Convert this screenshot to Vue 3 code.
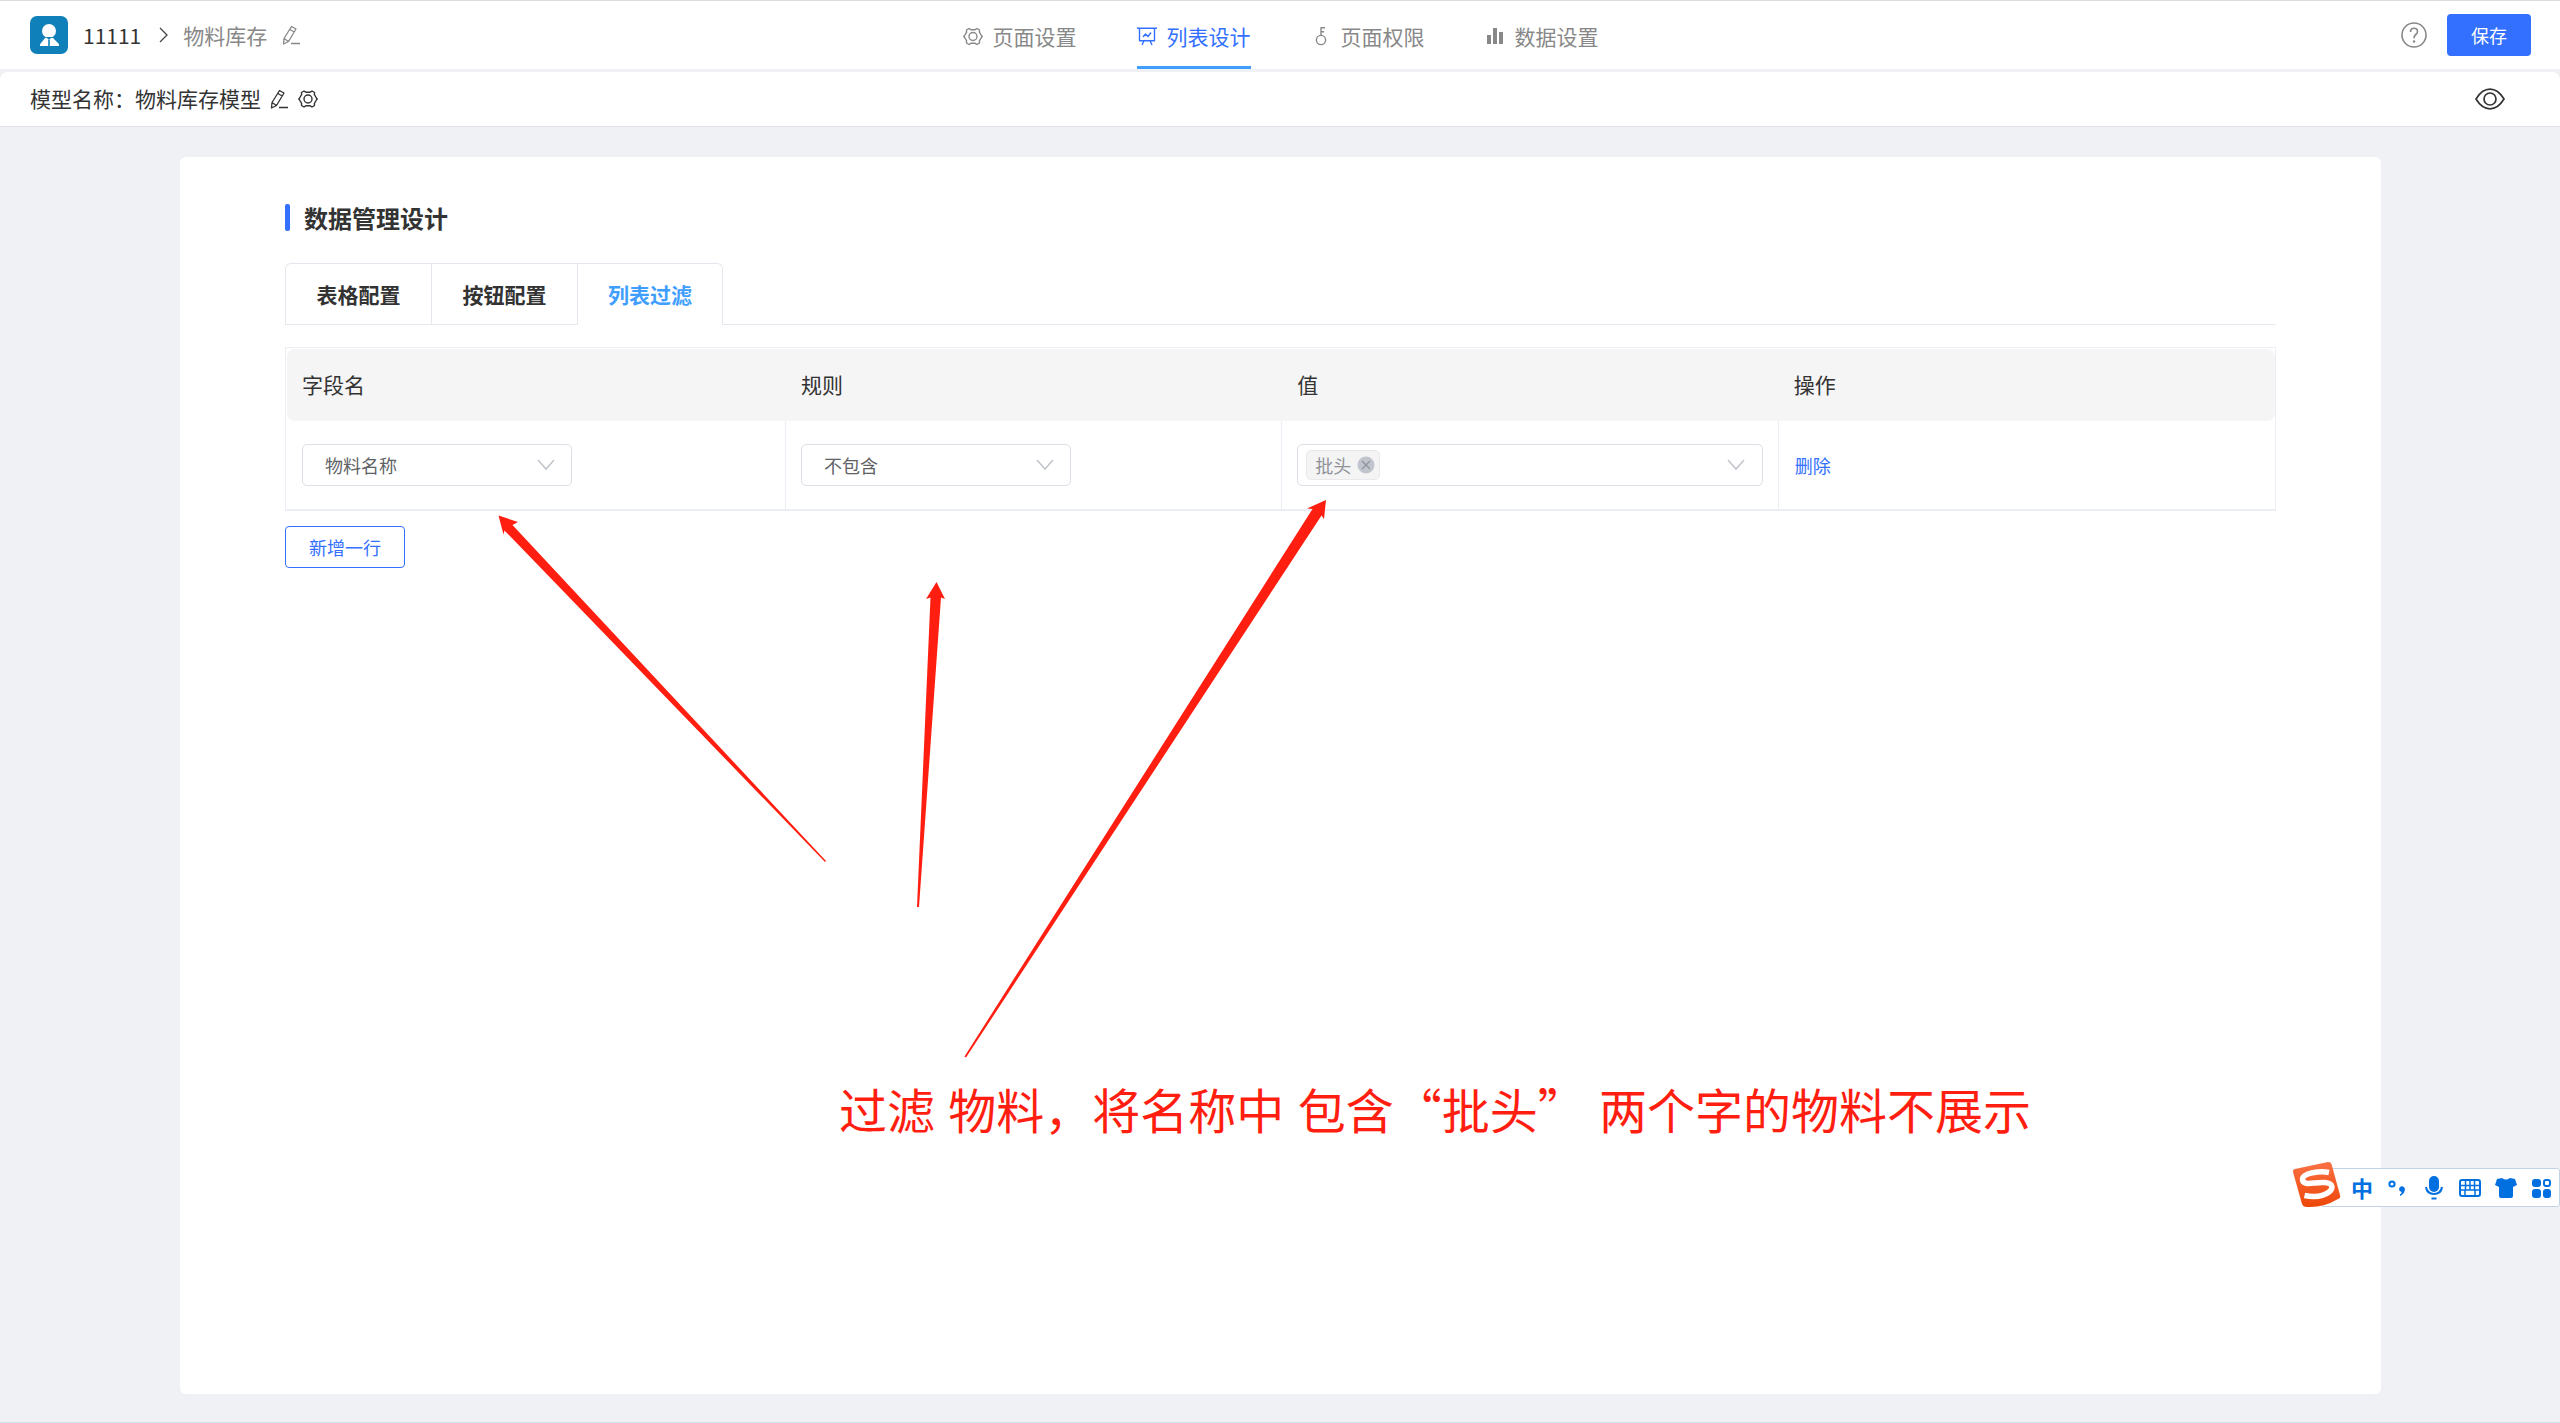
<script setup>
import { ref } from 'vue'

const navItems = [
  { name: '页面设置', icon: 'gear' },
  { name: '列表设计', icon: 'board' },
  { name: '页面权限', icon: 'key' },
  { name: '数据设置', icon: 'bars' },
]
const activeNav = ref('列表设计')

const tabs = ['表格配置', '按钮配置', '列表过滤']
const activeTab = ref('列表过滤')

const fields = ['物料名称', '物料编码']
const rules = ['不包含', '包含']
const rows = ref([{ field: '物料名称', rule: '不包含', values: ['批头'] }])

function addRow() {
  rows.value.push({ field: '物料名称', rule: '不包含', values: [] })
}
function removeRow(index) {
  rows.value.splice(index, 1)
}
</script>

<template>
  <div class="page">
    <header class="topbar">
      <div class="crumbs">
        <span class="app-logo">
          <svg viewBox="0 0 38 38" width="38" height="38" aria-hidden="true">
            <circle cx="19" cy="15" r="7" fill="#fff" />
            <path d="M15 22h8l5 5q1 1 1 2v1H10v-1q0-1 1-2z" fill="#fff" />
            <path d="M16 21l3 3 3-3z" fill="#0f80b9" />
            <path d="M19 24v6" stroke="#0f80b9" stroke-width="1.6" />
          </svg>
        </span>
        <span class="app-name">11111</span>
        <svg class="crumb-arrow" viewBox="0 0 10 18" width="10" height="18" aria-hidden="true">
          <path d="M1 2l7 7-7 7" fill="none" stroke="#444" stroke-width="1.3" />
        </svg>
        <span class="crumb-page">物料库存</span>
        <button class="icon-btn muted" type="button" aria-label="编辑页面名称">
          <svg viewBox="0 0 18 20" width="18" height="20" fill="none" stroke="currentColor" stroke-width="1.3" stroke-linejoin="round">
            <path d="M9.5 1.5l4.5 2.5-7.500 12.500-5 2.500.5-5.500zM7.800 4.500l4.500 2.500M2 13.500l4.500 3M9 18.500h9" />
          </svg>
        </button>
      </div>

      <nav class="main-nav">
        <a
          v-for="item in navItems"
          :key="item.name"
          href="#"
          :class="['nav-item', { active: item.name === activeNav }]"
          @click.prevent="activeNav = item.name"
        >
          <svg viewBox="0 -1 20 20" width="20" height="20" fill="none" stroke="currentColor" stroke-width="1.4" stroke-linejoin="round" aria-hidden="true">
            <template v-if="item.icon === 'gear'">
              <path d="M6 1.500l1.800 1.200h4.400L14 1.500l2.500 1.500-.1 2.200 2 3.300.8 1-.8 1-2 3.300.1 2.200L14 17.500l-1.800-1.200H7.800L6 17.500l-2.500-1.500.1-2.200-2-3.300-.8-1 .8-1 2-3.300-.1-2.200z" />
              <circle cx="10" cy="9.500" r="4" />
            </template>
            <template v-else-if="item.icon === 'board'">
              <path d="M0 1.200h20M2.500 1.200v12.600h15V1.200M7 13.800L5 18M13 13.800l2 4.200M6 10l2.500-3 2.500 2.500 3-4" />
            </template>
            <template v-else-if="item.icon === 'key'">
              <circle cx="10" cy="13" r="4.600" />
              <path d="M10 8.500V.7h4M10 4.800h3" />
            </template>
            <g v-else fill="currentColor" stroke="none">
              <path d="M2 8h4v9H2zM8 1h4v16H8zM14 5h4v12h-4z" />
            </g>
          </svg>
          <span>{{ item.name }}</span>
        </a>
      </nav>

      <div class="actions">
        <button class="icon-btn muted" type="button" aria-label="帮助">
          <svg viewBox="0 0 26 26" width="26" height="26" fill="none" stroke="currentColor" stroke-width="1.6">
            <circle cx="13" cy="13" r="12" />
            <path d="M9.500 10q0-3.800 3.500-3.800t3.500 3.400q0 1.600-1.700 2.900T13 16.200" />
            <circle cx="13" cy="19.500" r="1.200" fill="currentColor" stroke="none" />
          </svg>
        </button>
        <button class="save" type="button">保存</button>
      </div>
    </header>

    <section class="model-bar">
      <span class="model-name">模型名称：物料库存模型</span>
      <button class="icon-btn model-edit" type="button" aria-label="编辑模型名称">
        <svg viewBox="0 0 18 20" width="18" height="20" fill="none" stroke="currentColor" stroke-width="1.3" stroke-linejoin="round">
          <path d="M9.500 1.500l4.500 2.500-7.500 12.500-5 2.500.5-5.500zM7.800 4.500l4.500 2.500M2 13.500l4.500 3M9 18.500h9" />
        </svg>
      </button>
      <button class="icon-btn model-set" type="button" aria-label="模型设置">
        <svg viewBox="0 0 20 20" width="20" height="20" fill="none" stroke="currentColor" stroke-width="1.4" stroke-linejoin="round">
          <path d="M6 2l1.800 1.200h4.400L14 2l2.500 1.500-.1 2.200 2 3.300.8 1-.8 1-2 3.300.1 2.200L14 18l-1.800-1.200H7.800L6 18l-2.500-1.500.1-2.200-2-3.300-.8-1 .8-1 2-3.300-.1-2.200z" />
          <circle cx="10" cy="10" r="4" />
        </svg>
      </button>
      <button class="icon-btn preview" type="button" aria-label="预览">
        <svg viewBox="0 0 30 22" width="30" height="22" fill="none" stroke="currentColor" stroke-width="1.700">
          <path d="M1 11Q7 1.200 15 1.200T29 11Q23 20.800 15 20.800T1 11z" />
          <circle cx="15" cy="11" r="6" />
        </svg>
      </button>
    </section>

    <main class="card">
      <h1 class="title">数据管理设计</h1>

      <div class="tabs">
        <div class="tab-list" role="tablist">
          <button
            v-for="tab in tabs"
            :key="tab"
            type="button"
            role="tab"
            :aria-selected="tab === activeTab"
            :class="['tab', { active: tab === activeTab }]"
            @click="activeTab = tab"
          >{{ tab }}</button>
        </div>
      </div>

      <div class="table-wrap">
        <table>
          <thead>
            <tr>
              <th class="first">字段名</th>
              <th>规则</th>
              <th>值</th>
              <th>操作</th>
            </tr>
          </thead>
          <tbody>
            <tr v-for="(row, index) in rows" :key="index">
              <td>
                <span class="select">
                  <select v-model="row.field" aria-label="字段名">
                    <option v-for="field in fields" :key="field">{{ field }}</option>
                  </select>
                  <svg class="chevron" viewBox="0 0 18 12" width="18" height="12"><path d="M1 1l8 9 8-9" /></svg>
                </span>
              </td>
              <td>
                <span class="select">
                  <select v-model="row.rule" aria-label="规则">
                    <option v-for="rule in rules" :key="rule">{{ rule }}</option>
                  </select>
                  <svg class="chevron" viewBox="0 0 18 12" width="18" height="12"><path d="M1 1l8 9 8-9" /></svg>
                </span>
              </td>
              <td>
                <div class="multi">
                  <span v-for="(value, i) in row.values" :key="value" class="tag">
                    {{ value }}
                    <button class="tag-close" type="button" aria-label="移除" @click="row.values.splice(i, 1)">
                      <svg viewBox="0 0 18 18" width="18" height="18">
                        <circle cx="9" cy="9" r="8.500" fill="#c0c4cc" />
                        <path d="M5 5l8 8M13 5l-8 8" stroke="#909399" stroke-width="1.200" />
                      </svg>
                    </button>
                  </span>
                  <input type="text" aria-label="值" />
                  <svg class="chevron" viewBox="0 0 18 12" width="18" height="12"><path d="M1 1l8 9 8-9" /></svg>
                </div>
              </td>
              <td>
                <button class="remove" type="button" @click="removeRow(index)">删除</button>
              </td>
            </tr>
          </tbody>
        </table>
      </div>

      <button class="add" type="button" @click="addRow">新增一行</button>
    </main>

    <svg class="arrows" viewBox="490 495 850 570" width="850" height="570" fill="#ff1e10" aria-hidden="true">
      <path d="M498.500 515.500L518 522 512.500 525 826 861 825 862 504.500 530.500 503.500 534.500z" />
      <path d="M936.500 582L945 599 941 597.500 919 907 917 907 930.500 597.500 926 599z" />
      <path d="M1326 500L1324 519 1321.500 515.500 966 1057.500 964.500 1056.500 1312.500 509 1307 508.500z" />
    </svg>
    <p class="note">过滤 物料，将名称中 包含<span class="quoted">“批头”</span> 两个字的物料不展示</p>

    <aside class="ime" aria-label="输入法">
      <svg class="ime-logo" viewBox="0 0 48 46" width="48" height="46" aria-hidden="true">
        <defs>
          <linearGradient id="ime-orange" x1="0" y1="0" x2="0" y2="1">
            <stop offset="0" stop-color="#fa7044" />
            <stop offset="1" stop-color="#ee4709" />
          </linearGradient>
        </defs>
        <path d="M2 7L35 0Q38 0 38.500 2L47 33Q48 36 45 37Q30 46 14 45Q10 45 9 42L0 10Q0 7 2 7z" fill="url(#ime-orange)" />
        <path d="M36 10.500C27 8.500 10 11 9.500 17C9.500 25 22 19.500 32 20.500C41 21.500 40 27 36 30C30 34.500 21 35.500 11.500 33.500" fill="none" stroke="#fff" stroke-width="5.500" />
      </svg>
      <span class="ime-lang">中</span>
      <svg viewBox="0 0 22 22" width="22" height="22" aria-hidden="true">
        <circle cx="5" cy="7" r="2.600" fill="none" stroke="#0070e0" stroke-width="2" />
        <path d="M12 12a3 3 0 1 1 5.500 2q-.5 3-4.500 5v-1.500q1.500-1 1.700-2.500Q12 14.500 12 12z" fill="#0070e0" />
      </svg>
      <svg viewBox="0 0 22 24" width="22" height="24" fill="none" stroke="#0070e0" stroke-width="2" aria-hidden="true">
        <rect x="7" y="1" width="8" height="14" rx="4" fill="#0070e0" />
        <path d="M3 11q1 7 8 7t8-7M8.500 22.500h5" />
      </svg>
      <svg viewBox="0 0 22 22" width="22" height="22" aria-hidden="true">
        <rect x="1" y="3" width="20" height="16" rx="2" fill="none" stroke="#0070e0" stroke-width="2" />
        <path d="M2 8.500h18M2 13h18M6.500 4v9M11 4v9M15.500 4v9M6 13v5M16 13v5" stroke="#0070e0" stroke-width="1.500" />
      </svg>
      <svg viewBox="0 0 22 22" width="22" height="22" aria-hidden="true">
        <path d="M7 1q4 3 8 0l5 1 2 6-4 2v9q0 2-2 2H6q-2 0-2-2v-9L0 8l2-6z" fill="#0070e0" />
      </svg>
      <svg viewBox="0 0 22 22" width="22" height="22" fill="#0070e0" aria-hidden="true">
        <rect x="1" y="2" width="9" height="8" rx="3" />
        <rect x="13" y="3" width="6" height="6" rx="2" fill="none" stroke="#0070e0" stroke-width="2" />
        <rect x="1" y="12" width="9" height="9" rx="3" />
        <rect x="12" y="12" width="8" height="9" rx="3" />
      </svg>
    </aside>
  </div>
</template>

<style>
body {
  background: #f0f1f5;
}
</style>

<style scoped>
* {
  box-sizing: border-box;
}
.page {
  position: relative;
  display: flex;
  flex-direction: column;
  min-height: 100vh;
  overflow: hidden;
  background: #f0f1f5;
  border-bottom: 1px solid #d3e5ee;
  color: #333;
  font-family: "Noto Sans CJK SC", sans-serif;
  font-size: 21px;
  line-height: 30px;
}
button,
input,
select {
  font-family: inherit;
  color: inherit;
  margin: 0;
}
button {
  padding: 0;
  border: 0;
  background: none;
  cursor: pointer;
}
svg {
  display: block;
  flex: none;
}
.icon-btn {
  color: #333;
}
.muted {
  color: #888;
}

.topbar {
  display: grid;
  grid-template-columns: 1fr auto 1fr;
  height: 69px;
  padding: 0 29px 0 30px;
  background: #fff;
  border-top: 1px solid #dcdcdc;
}
.crumbs {
  display: flex;
  align-items: center;
}
.app-logo {
  border-radius: 7px;
  background: #0f80b9;
}
.app-name {
  margin-left: 15px;
}
.crumb-arrow {
  margin: 0 14px 0 18px;
}
.crumb-page {
  margin-right: 15px;
  color: #888;
}
.main-nav {
  display: flex;
  gap: 60px;
}
.nav-item {
  display: flex;
  align-items: center;
  gap: 10px;
  padding-top: 4px;
  border-bottom: 3px solid transparent;
  color: #888;
  text-decoration: none;
}
.nav-item.active {
  color: #3370ff;
  border-bottom-color: #409eff;
}
.actions {
  display: flex;
  align-items: center;
  justify-content: flex-end;
  gap: 20px;
}
.save {
  width: 84px;
  height: 42px;
  border-radius: 4px;
  background: #3370ff;
  color: #fff;
  font-size: 18px;
}

.model-bar {
  display: flex;
  align-items: center;
  height: 55px;
  margin-top: 3px;
  padding: 0 55px 0 30px;
  background: #fff;
  border-bottom: 1px solid #dfe2ea;
  border-radius: 8px 8px 0 0;
}
.model-name {
  padding-bottom: 2px;
}
.model-edit {
  margin-left: 9px;
}
.model-set {
  margin-left: 10px;
}
.preview {
  margin-left: auto;
}

.card {
  flex: 1;
  margin: 30px 179px 28px 180px;
  padding: 47px 105px;
  background: #fff;
  border-radius: 6px;
}
.title {
  display: flex;
  align-items: center;
  gap: 14px;
  margin: 0;
  font-size: 24px;
  line-height: 27px;
}
.title::before {
  content: "";
  width: 5px;
  height: 27px;
  border-radius: 2px;
  background: #3370ff;
}

.tabs {
  display: flex;
  height: 62px;
  margin-top: 32px;
  border-bottom: 1px solid #e4e7ed;
}
.tab-list {
  display: flex;
  height: 62px;
  border: 1px solid #e4e7ed;
  border-bottom: 0;
  border-radius: 6px 6px 0 0;
}
.tab {
  min-width: 146px;
  border-right: 1px solid #e4e7ed;
  border-bottom: 1px solid #e4e7ed;
  font-size: 21px;
  font-weight: 700;
}
.tab:last-child {
  min-width: 144px;
  border-right: 0;
}
.tab.active {
  border-bottom-color: #fff;
  border-radius: 0 6px 0 0;
  background: #fff;
  color: #409eff;
}

.table-wrap {
  margin-top: 22px;
  padding: 1px 0 0 1px;
  border: 1px solid #ebeef5;
  border-bottom-width: 2px;
}
table {
  width: 100%;
  table-layout: fixed;
  border-spacing: 0;
}
th {
  height: 72px;
  padding: 0 15px 2px;
  background: #f5f5f5;
  font-weight: 400;
  text-align: left;
}
th.first {
  width: 25.1%;
}
th:first-child {
  border-radius: 8px 0 0 8px;
}
th:last-child {
  border-radius: 0 8px 8px 0;
}
td {
  height: 88px;
  padding: 0 15px;
  border-right: 1px solid #ebeef5;
}
td:last-child {
  border-right: 0;
}
.select {
  position: relative;
  display: block;
  width: 270px;
}
.select select {
  display: block;
  width: 100%;
  height: 42px;
  padding: 0 45px 0 22px;
  appearance: none;
  border: 1px solid #dcdfe6;
  border-radius: 5px;
  background: #fff;
  color: #606266;
  font-size: 18px;
}
.chevron {
  fill: none;
  stroke: #c0c4cc;
  stroke-width: 1.5;
}
.select .chevron {
  position: absolute;
  top: 15px;
  right: 17px;
  pointer-events: none;
}
.multi {
  display: flex;
  align-items: center;
  height: 42px;
  padding: 0 17px 0 8px;
  border: 1px solid #dcdfe6;
  border-radius: 5px;
}
.multi input {
  flex: 1;
  min-width: 0;
  border: 0;
  outline: 0;
  background: none;
  font-size: 18px;
}
.tag {
  display: flex;
  align-items: center;
  gap: 6px;
  height: 30px;
  padding: 0 4px 0 8px;
  border: 1px solid #e9e9eb;
  border-radius: 5px;
  background: #f4f4f5;
  color: #909399;
  font-size: 18px;
}
.remove {
  display: block;
  padding: 0 1px;
  color: #3370ff;
  font-size: 18px;
}
.add {
  width: 120px;
  height: 42px;
  margin-top: 15px;
  border: 1px solid #3370ff;
  border-radius: 4px;
  background: #fff;
  color: #3370ff;
  font-size: 18px;
}

/* Markup drawn over the page */
.arrows {
  position: absolute;
  left: 490px;
  top: 495px;
  pointer-events: none;
}
.note {
  position: absolute;
  left: 839px;
  top: 1078px;
  margin: 0;
  color: #ff1e10;
  font-family: "Liberation Sans", "Noto Sans CJK SC", sans-serif;
  font-size: 48px;
  line-height: 60px;
  white-space: nowrap;
}
.quoted {
  font-family: "Noto Sans CJK SC", sans-serif;
}

/* Floating input-method bar */
.ime {
  position: absolute;
  top: 1168px;
  right: 0;
  display: flex;
  align-items: center;
  gap: 14px;
  height: 39px;
  padding: 0 6px 0 30px;
  border: 1px solid #c3d3e6;
  border-radius: 3px;
  background: #fff;
}
.ime-logo {
  position: absolute;
  top: -7px;
  left: -28px;
}
.ime-lang {
  width: 22px;
  padding-bottom: 2px;
  color: #0070e0;
  font-size: 22px;
  font-weight: 700;
}
</style>
